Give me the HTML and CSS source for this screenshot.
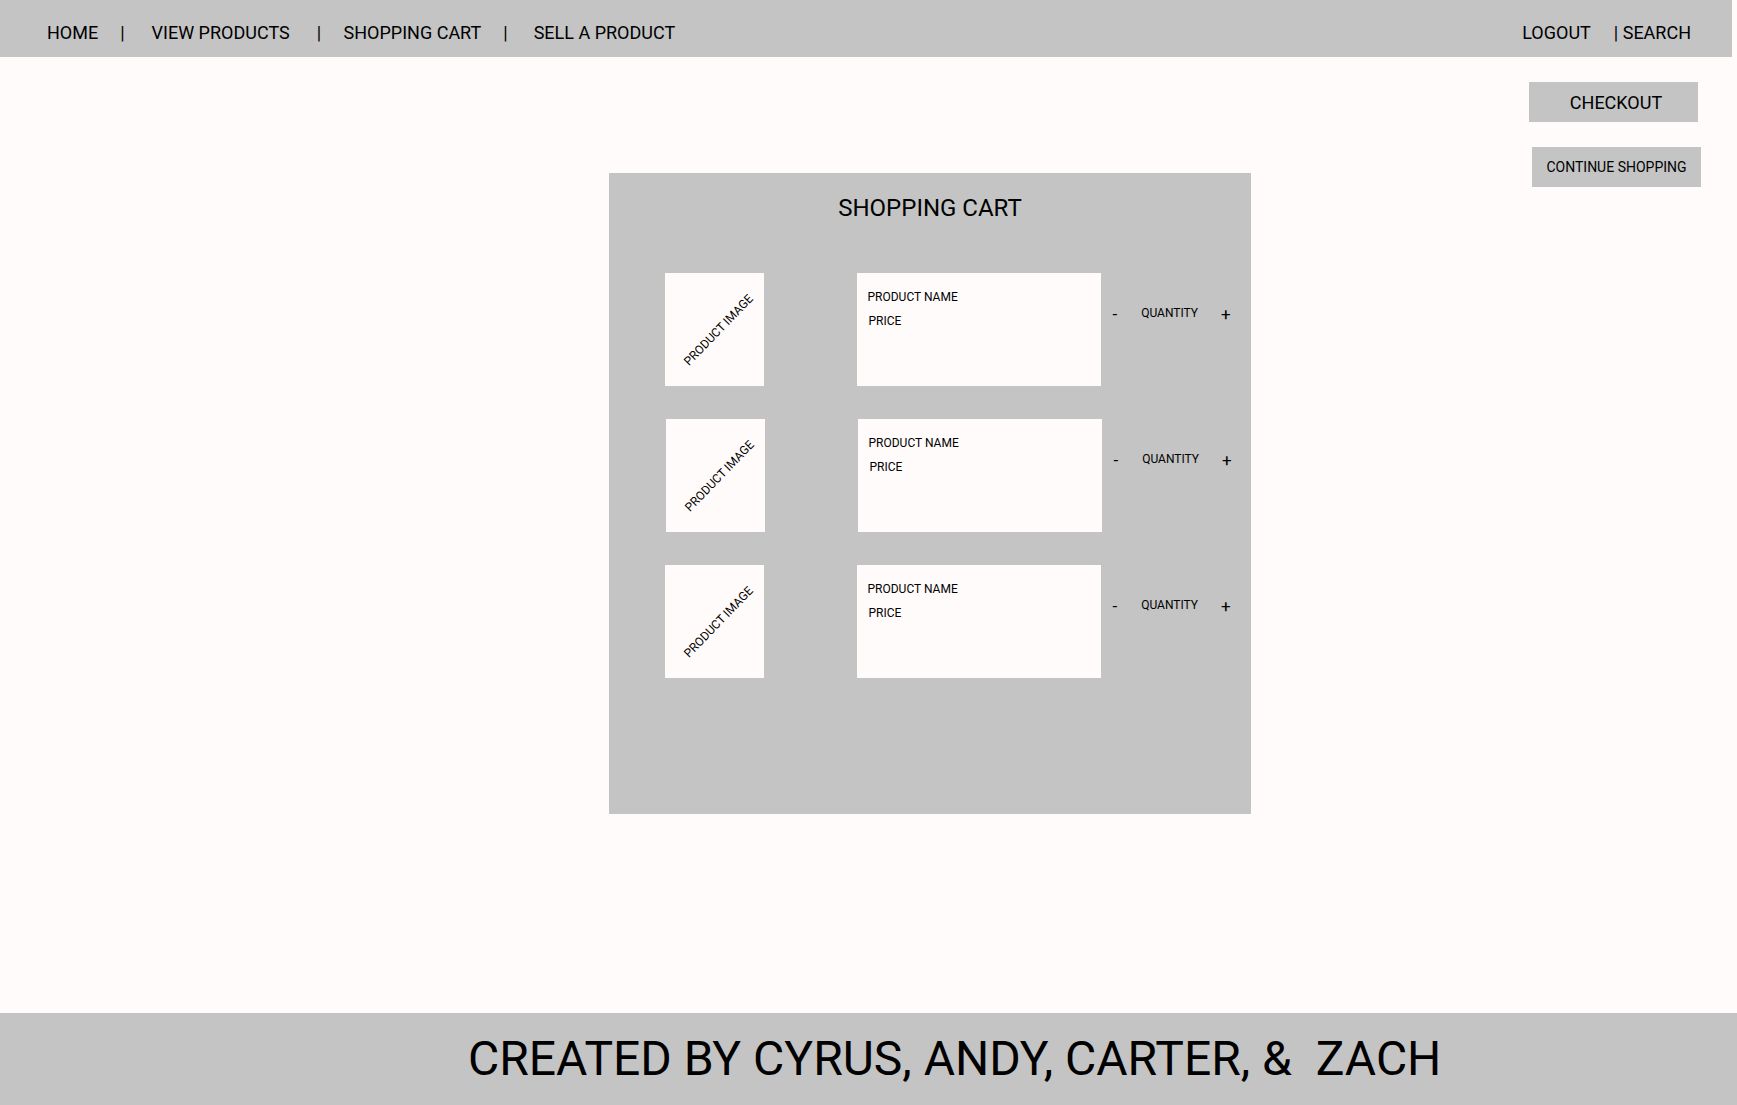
FILE: index.html
```html
<!DOCTYPE html>
<html lang="en">
<head>
<meta charset="utf-8">
<title>Shopping Cart</title>
<link rel="stylesheet" href="styles.css">
</head>
<body>
<header class="topbar">
  <nav class="nav-left">
    <span class="nav-item nav-home">HOME</span>
    <span class="nav-sep sep-1">|</span>
    <span class="nav-item nav-view">VIEW PRODUCTS</span>
    <span class="nav-sep sep-2">|</span>
    <span class="nav-item nav-cart">SHOPPING CART</span>
    <span class="nav-sep sep-3">|</span>
    <span class="nav-item nav-sell">SELL A PRODUCT</span>
  </nav>
  <nav class="nav-right">
    <span class="nav-item">LOGOUT</span>
    <span class="nav-item nav-search">| SEARCH</span>
  </nav>
</header>

<main class="main">
  <section class="cart">
    <h1 class="cart-title">SHOPPING CART</h1>
    <div class="rows">
      <div class="row">
        <div class="prod-img"><span class="prod-img-label">PRODUCT IMAGE</span></div>
        <div class="prod-info">
          <div class="prod-name">PRODUCT NAME</div>
          <div class="prod-price">PRICE</div>
        </div>
        <div class="qty">
          <span class="qty-btn qty-minus">-</span>
          <span class="qty-label">QUANTITY</span>
          <span class="qty-btn qty-plus">+</span>
        </div>
      </div>
      <div class="row row-shift">
        <div class="prod-img"><span class="prod-img-label">PRODUCT IMAGE</span></div>
        <div class="prod-info">
          <div class="prod-name">PRODUCT NAME</div>
          <div class="prod-price">PRICE</div>
        </div>
        <div class="qty">
          <span class="qty-btn qty-minus">-</span>
          <span class="qty-label">QUANTITY</span>
          <span class="qty-btn qty-plus">+</span>
        </div>
      </div>
      <div class="row">
        <div class="prod-img"><span class="prod-img-label">PRODUCT IMAGE</span></div>
        <div class="prod-info">
          <div class="prod-name">PRODUCT NAME</div>
          <div class="prod-price">PRICE</div>
        </div>
        <div class="qty">
          <span class="qty-btn qty-minus">-</span>
          <span class="qty-label">QUANTITY</span>
          <span class="qty-btn qty-plus">+</span>
        </div>
      </div>
    </div>
  </section>

  <aside class="actions">
    <button class="btn btn-checkout">CHECKOUT</button>
    <button class="btn btn-continue">CONTINUE SHOPPING</button>
  </aside>
</main>

<footer class="footer">
  <p class="footer-text">CREATED BY CYRUS, ANDY, CARTER, &amp;&nbsp; ZACH</p>
</footer>
</body>
</html>
```

FILE: styles.css
```css
* {
  box-sizing: border-box;
}

html, body {
  margin: 0;
  padding: 0;
}

body {
  background: #fffbfa;
  color: #000;
  font-family: Roboto, "Liberation Sans", Arial, sans-serif;
  width: 1737px;
  height: 1105px;
  overflow: hidden;
  display: flex;
  flex-direction: column;
}

/* ---------- header ---------- */
.topbar {
  width: 1732px;
  height: 57px;
  background: #c4c4c4;
  display: flex;
  align-items: center;
  padding: 8px 41px 0 47px;
  font-size: 18px;
  line-height: 21px;
  flex-shrink: 0;
}

.nav-left,
.nav-right {
  display: flex;
  align-items: center;
  white-space: nowrap;
}

.nav-right {
  margin-left: auto;
}

.sep-1 { margin-left: 22px; }
.nav-view { margin-left: 27px; }
.sep-2 { margin-left: 27px; }
.nav-cart { margin-left: 22.5px; }
.sep-3 { margin-left: 22px; }
.nav-sell { margin-left: 26px; }

.nav-search {
  margin-left: 23px;
}

/* ---------- main ---------- */
.main {
  height: 956px;
  display: flex;
  align-items: flex-start;
  padding-left: 609px;
  flex-shrink: 0;
}

.cart {
  width: 642px;
  height: 641px;
  margin-top: 116px;
  background: #c4c4c4;
  padding-top: 21px;
}

.cart-title {
  margin: 0;
  font-size: 24px;
  font-weight: 400;
  line-height: 28px;
  text-align: center;
}

.rows {
  margin-top: 51px;
  padding-left: 56px;
  display: flex;
  flex-direction: column;
  gap: 33px;
}

.row {
  display: flex;
  align-items: flex-start;
  height: 113px;
}

.row-shift {
  margin-left: 1px;
}

.prod-img {
  width: 99px;
  height: 113px;
  background: #fffbfa;
  display: flex;
  align-items: center;
  justify-content: center;
  overflow: hidden;
}

.prod-img-label {
  font-size: 12px;
  line-height: 14px;
  white-space: nowrap;
  transform: translate(4px, 0) rotate(-46deg);
}

.prod-info {
  width: 244px;
  height: 113px;
  margin-left: 93px;
  background: #fffbfa;
  padding: 12px 0 0 10.5px;
  font-size: 12px;
  line-height: 24px;
}

.prod-price {
  padding-left: 1px;
}

.qty {
  display: flex;
  align-items: center;
  height: 20px;
  margin-top: 31px;
  margin-left: 11.5px;
  line-height: 20px;
}

.qty-btn {
  font-size: 17px;
}

.qty-label {
  font-size: 12px;
  margin-left: 24px;
  margin-right: 23px;
  position: relative;
  top: -1px;
}

/* ---------- actions ---------- */
.actions {
  display: flex;
  flex-direction: column;
  align-items: flex-start;
  margin-left: 278px;
  padding-top: 25px;
  gap: 25px;
}

.btn {
  width: 169px;
  height: 40px;
  border: 0;
  background: #c4c4c4;
  color: #000;
  font-family: Roboto, "Liberation Sans", Arial, sans-serif;
  padding: 0;
  display: flex;
  align-items: center;
  justify-content: center;
}

.btn-checkout {
  font-size: 18px;
  padding-left: 5px;
}

.btn-continue {
  font-size: 14px;
  margin-left: 3px;
}

/* ---------- footer ---------- */
.footer {
  height: 92px;
  background: #c4c4c4;
  display: flex;
  align-items: center;
  padding-left: 468px;
  flex-shrink: 0;
}

.footer-text {
  margin: 0;
  font-size: 48px;
  line-height: 56px;
  white-space: nowrap;
}
```
